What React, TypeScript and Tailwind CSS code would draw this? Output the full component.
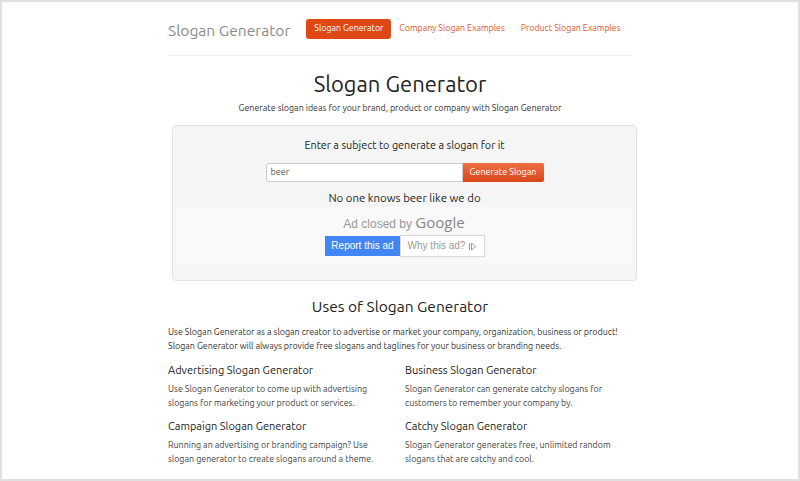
import React from "react";

const font = { fontFamily: "Ubuntu, Lato, 'Open Sans', sans-serif" };

export default function App() {
  return (
    <div
      className="w-[800px] h-[481px] overflow-hidden bg-white border-2 border-[#e0e0e0] text-[#333]"
      style={font}
    >
      <div className="w-[464px] mx-auto">
        {/* Header */}
        <div className="h-[54px] flex items-center border-b border-[#f0f0f0] whitespace-nowrap">
          <div className="text-[15.6px] text-[#8a8a8a] leading-none mr-[16px] mt-[5px]">Slogan Generator</div>
          <div className="flex items-center text-[8.8px] leading-none">
            <div className="bg-[#dd4814] text-white rounded-[3px] px-2 h-[20px] flex items-center">Slogan Generator</div>
            <div className="text-[#e0562a] px-2">Company Slogan Examples</div>
            <div className="text-[#e0562a] px-2">Product Slogan Examples</div>
          </div>
        </div>

        <h1 className="text-[22px] leading-[30px] text-center text-[#222] mt-[13px]">Slogan Generator</h1>
        <p className="text-[8.9px] leading-[14px] text-center mt-[2px]">
          Generate slogan ideas for your brand, product or company with Slogan Generator
        </p>

        {/* Panel */}
        <div className="mt-[10px] ml-[4px] w-[465px] h-[156px] bg-[#f5f5f5] border border-[#e3e3e3] rounded-[4px] pt-[11px] px-[3px]">
          <div className="text-[10.8px] leading-[16px] text-center text-[#222]">Enter a subject to generate a slogan for it</div>
          <div className="flex justify-center mt-[10px]">
            <div className="w-[197px] h-[19px] bg-white border border-[#ccc] rounded-l-[3px] text-[9px] leading-[17px] pl-[4px] text-[#555]">
              beer
            </div>
            <div className="w-[81px] h-[19px] bg-gradient-to-b from-[#ee6e3f] to-[#d9461a] text-white text-[9px] leading-[19px] text-center rounded-r-[2px] whitespace-nowrap">
              Generate Slogan
            </div>
          </div>
          <div className="text-[11.4px] leading-[16px] text-center mt-[8px] text-[#222]">No one knows beer like we do</div>
          <div className="mt-[1px] w-[456px] h-[57px] bg-[#f9f9f9] pt-[7px]" style={{ fontFamily: "'Liberation Sans', Arial, sans-serif" }}>
            <div className="text-center text-[12px] leading-[16px] text-[#9a9a9a]">
              Ad closed by <span className="text-[15px] text-[#888] font-medium" style={{ fontFamily: "'Open Sans', sans-serif" }}>Google</span>
            </div>
            <div className="flex justify-center mt-[4px] ml-[1px] whitespace-nowrap">
              <div className="w-[75px] h-[20px] bg-[#4285f4] text-white text-[10px] leading-[20px] text-center">Report this ad</div>
              <div className="w-[83px] h-[20px] bg-white text-[#9a9a9a] text-[10px] leading-[20px] text-center ml-[1px] shadow-[0_0_1px_1px_rgba(0,0,0,0.12)] flex items-center justify-center gap-[3px]">
                Why this ad?
                <svg width="9" height="9" viewBox="0 0 9 9" fill="none" stroke="#9a9a9a" strokeWidth="1">
                  <path d="M1.5 1v7" />
                  <path d="M3.5 1.2l4.2 3.3-4.2 3.3z" />
                </svg>
              </div>
            </div>
          </div>
        </div>

        <h2 className="text-[15.5px] leading-[24px] text-center text-[#222] mt-[14px]">Uses of Slogan Generator</h2>
        <p className="text-[8.9px] leading-[14px] mt-[6px]">
          Use Slogan Generator as a slogan creator to advertise or market your company, organization, business or product!
          Slogan Generator will always provide free slogans and taglines for your business or branding needs.
        </p>

        <div className="grid grid-cols-2 gap-x-[10px] gap-y-[8px] mt-[9px]">
          {[
            ["Advertising Slogan Generator", "Use Slogan Generator to come up with advertising slogans for marketing your product or services."],
            ["Business Slogan Generator", "Slogan Generator can generate catchy slogans for customers to remember your company by."],
            ["Campaign Slogan Generator", "Running an advertising or branding campaign? Use slogan generator to create slogans around a theme."],
            ["Catchy Slogan Generator", "Slogan Generator generates free, unlimited random slogans that are catchy and cool."],
          ].map(([h, t]) => (
            <div key={h}>
              <h3 className="text-[11px] leading-[16px] text-[#222]">{h}</h3>
              <p className="text-[8.9px] leading-[13.5px] mt-[5px] text-[#444] pr-[10px]">{t}</p>
            </div>
          ))}
        </div>
      </div>
    </div>
  );
}
